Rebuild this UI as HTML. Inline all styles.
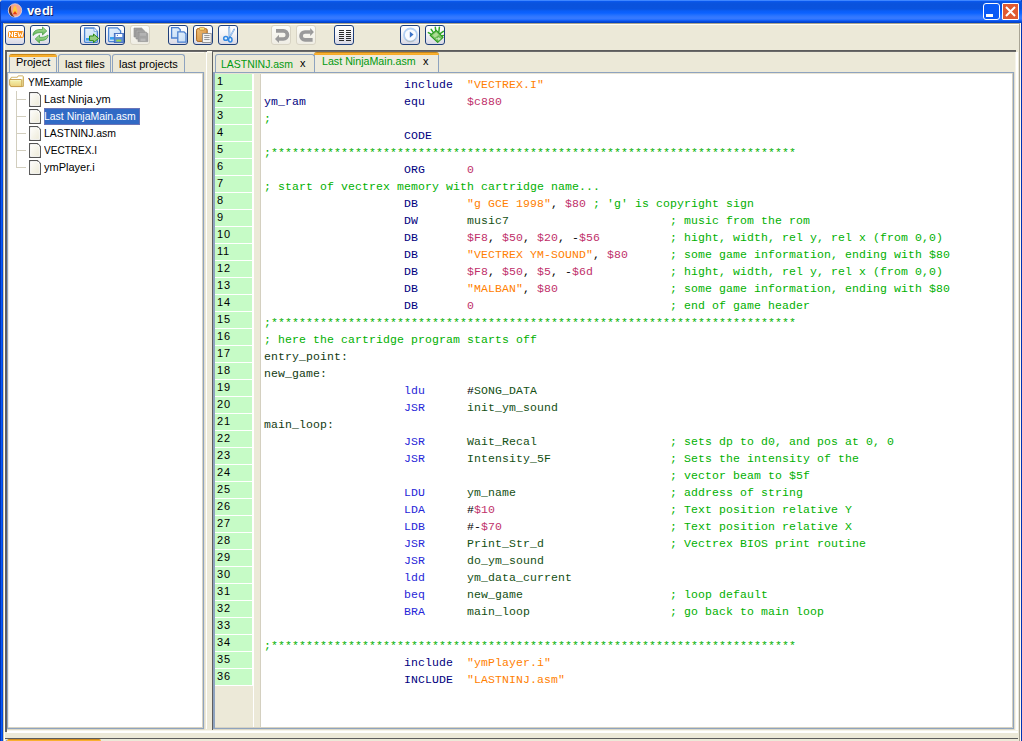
<!DOCTYPE html>
<html><head><meta charset="utf-8">
<style>
*{margin:0;padding:0;box-sizing:border-box}
html,body{width:1022px;height:741px;overflow:hidden;background:#ece9d8;position:relative;font-family:"Liberation Sans",sans-serif;font-size:11px}
.a{position:absolute}
/* title bar */
#title{left:0;top:0;width:1022px;height:23px;
 background:linear-gradient(to bottom,#3f86ff 0px,#3f86ff 1px,#0a5af5 1px,#0a55e4 2px,#0a52dc 4px,#0a53de 9px,#0a5ef8 11px,#0c62ff 13px,#2270ff 15px,#3478ff 17px,#3579ff 19px,#1866ff 20px,#0a55f0 21px,#0444cc 22px,#0040c4 23px)}
#title .txt{left:27px;top:3px;color:#fff;font-weight:bold;font-size:13px;letter-spacing:-0.3px;text-shadow:1px 1px 0 #0a1e6a}
.cap{top:3px;width:17px;height:17px;border:1px solid #fff;border-radius:3px}
/* left window border */
#lb{left:0;top:23px;width:3px;height:718px;background:linear-gradient(to right,#0034b4 0,#0034b4 1px,#0b5cf8 1px,#0a58f2 2px,#0048dc 2px,#0048dc 3px)}
#rb{left:1019px;top:23px;width:3px;height:718px;background:linear-gradient(to right,#a8a494 0,#a8a494 1px,#fcfaf2 1px,#fcfaf2 2px,#0034b4 2px)}
/* toolbar */
.tb{top:25px;width:20px;height:20px;border:1px solid #1e3f7a;border-radius:3px;background:linear-gradient(#ffffff,#f6f6f8 40%,#d8d8e4)}
.tbd{top:25px;width:20px;height:20px;border:1px solid #d8d4c4;border-radius:3px;background:linear-gradient(#fcfcf8,#efede4)}
.tb svg,.tbd svg{position:absolute;left:0;top:0}
/* docks */
.dark{background:#5f5f5f}
.bg{background:#8da0bb}
.tab{height:18px;border:1px solid #8ea3bf;border-bottom:none;border-radius:3px 3px 0 0;background:#ece9d8}
.tab span{position:absolute;white-space:nowrap}
.sel{border-top:none}
.sel .or{position:absolute;left:-1px;right:-1px;top:0;height:3px;background:linear-gradient(#c8881c 0,#c8881c 1px,#f9b232 1px,#f7a824);border-radius:3px 3px 0 0}
/* tree */
.tr{left:44px;white-space:nowrap;color:#000}
.fi{width:12px;height:14px}
/* editor */
#code{left:264px;top:76px;width:748px;height:653px;font-family:"Liberation Mono",monospace;font-size:11.5px;letter-spacing:0.1px}
.ln{position:absolute;left:0;height:17px;line-height:17px;white-space:pre;width:740px}
.ln i{position:absolute;top:0;font-style:normal;white-space:pre}
.k{color:#000080}.j{color:#2626d8}.o{color:#134f13}.s{color:#ff8000}.n{color:#c0306a}.c{color:#00b000}.p{color:#000}.l{color:#000080}.b{color:#123a12}
.g{position:absolute;left:0;width:37px;height:16px;background:#c6fbc6;line-height:14px;padding-left:2px;font-size:11px;color:#000;letter-spacing:0.8px}
</style></head><body>
<!-- title bar -->
<div id="title" class="a">
 <svg class="a" style="left:5px;top:1px" width="20" height="20" viewBox="0 0 20 20">
  <defs><radialGradient id="rg" cx="55%" cy="45%" r="55%"><stop offset="0" stop-color="#f4a898"/><stop offset="0.8" stop-color="#f0a090"/><stop offset="1" stop-color="#e8c8c0"/></radialGradient></defs>
  <circle cx="10" cy="9.4" r="6.7" fill="url(#rg)" stroke="#f4e4e0" stroke-width="0.7"/>
  <path d="M6.2 4.6 A6.4 6.4 0 0 0 9.6 15.9 Q4.8 12 6.2 4.6 Z" fill="#6a3422"/>
  <path d="M10 4.6 C11.6 6.6 12.8 9.2 12 12.2 L8 12.2 C7.2 9.2 8.4 6.6 10 4.6Z" fill="#ffc83c"/>
  <path d="M10 10 L12.2 13.2 L7.8 13.2Z" fill="#e83a10"/>
 </svg>
 <div class="a txt">ve<span style="margin-left:1px">di</span></div>
 <div class="a cap" style="left:983px;background:#0a5af5"><div class="a" style="left:2px;top:10px;width:7px;height:3px;background:#fff"></div></div>
 <div class="a cap" style="left:1002px;background:#e05a32;border-radius:1px">
  <svg class="a" style="left:0;top:0" width="15" height="15" viewBox="0 0 15 15"><path d="M3 3 L12 12 M12 3 L3 12" stroke="#fff" stroke-width="2"/></svg>
 </div>
</div>
<div id="lb" class="a"></div>
<div class="a" style="left:0;top:0;width:1px;height:1px;background:#e6dcb8"></div>
<div class="a" style="left:1px;top:0;width:1px;height:1px;background:#7f9ad8"></div>
<div class="a" style="left:0;top:1px;width:1px;height:1px;background:#7f9ad8"></div>
<div class="a" style="left:1021px;top:0;width:1px;height:2px;background:#0846c8"></div>
<div id="rb" class="a"></div>
<!-- toolbar frame highlights -->
<div class="a" style="left:3px;top:23px;width:1016px;height:1px;background:#aca68e"></div>
<div class="a" style="left:3px;top:24px;width:1016px;height:1px;background:#fffef8"></div>
<div class="a" style="left:3px;top:23px;width:1px;height:718px;background:#cfc8aa"></div>
<div class="a" style="left:4px;top:24px;width:1px;height:717px;background:#fffffa"></div>
<div class="a" style="left:0;top:2px;width:1px;height:21px;background:#0840c0"></div>

<!-- toolbar buttons -->
<svg width="0" height="0" style="position:absolute"><defs>
 <linearGradient id="gA" x1="0" y1="0" x2="0" y2="1"><stop offset="0" stop-color="#b4e4a4"/><stop offset="1" stop-color="#5ab04a"/></linearGradient>
 <linearGradient id="bD" x1="0" y1="0" x2="1" y2="1"><stop offset="0" stop-color="#e4f0fc"/><stop offset="1" stop-color="#c4dcf6"/></linearGradient>
 <linearGradient id="cB" x1="0" y1="0" x2="1" y2="1"><stop offset="0" stop-color="#f0c078"/><stop offset="1" stop-color="#d08838"/></linearGradient>
</defs></svg>
<div class="a tb" style="left:5px">
 <svg width="18" height="18" viewBox="0 0 18 18"><rect x="2" y="5" width="16" height="7" rx="2.2" fill="#f8921c"/><path d="M3.5 11 V6 M3.5 6.2 L6.5 10.8 M6.5 11 V6 M8.5 11 V6 M8 6.5 H11 M8 8.5 H10.5 M8 10.5 H11 M12 6 L13 10.8 L14.5 7.6 L16 10.8 L17 6" fill="none" stroke="#fff" stroke-width="1"/></svg>
</div>
<div class="a tb" style="left:30px">
 <svg width="18" height="18" viewBox="0 0 18 18"><path d="M2 9.5 C2 5.5 5 3.5 9 3.5 H11.5 V1 L15.8 5 L11.5 9 V6.6 H9 C6 6.6 4 7.8 2 9.5 Z" fill="url(#gA)" stroke="#3c9a3c" stroke-width="0.7"/><path d="M17 9 C17 13 14 14.5 10 14.5 H8.5 V17 L4.2 13 L8.5 9 V11.4 H10 C13 11.4 15 10.5 17 9 Z" fill="url(#gA)" stroke="#3c9a3c" stroke-width="0.7"/></svg>
</div>
<div class="a tb" style="left:80px">
 <svg width="18" height="18" viewBox="0 0 18 18"><path d="M3.6 2 H13 L16.4 5.4 V15.6 Q16.4 16.4 15.6 16.4 H4.4 Q3.6 16.4 3.6 15.6Z" fill="url(#bD)" stroke="#4a84d2" stroke-width="1.3"/><path d="M13 2 V5.4 H16.4" fill="#fff" stroke="#6a9ade" stroke-width="0.8"/><rect x="5" y="12" width="3.5" height="2.6" fill="#38a2f0"/><path d="M8.5 10 H12.5 V8 L17.6 12.4 L12.5 16.6 V14.6 H8.5Z" fill="#96cc80" stroke="#2a8a12" stroke-width="1"/></svg>
</div>
<div class="a tb" style="left:105px">
 <svg width="18" height="18" viewBox="0 0 18 18"><path d="M2.6 1.8 H11.5 L14.6 4.9 V14.8 Q14.6 15.6 13.8 15.6 H3.4 Q2.6 15.6 2.6 14.8Z" fill="url(#bD)" stroke="#4a84d2" stroke-width="1.3"/><rect x="4" y="11" width="4" height="2.6" fill="#38a2f0"/><rect x="8.3" y="7.4" width="9.2" height="9.2" fill="#5e8cd6" stroke="#3a66bc" stroke-width="0.8"/><rect x="9.6" y="8" width="6.6" height="3" fill="#fafcff"/><circle cx="11.4" cy="9.3" r="0.6" fill="#3a66bc"/><rect x="10.3" y="13.6" width="5" height="2" fill="#98d848"/></svg>
</div>
<div class="a tbd" style="left:130px">
 <svg width="18" height="18" viewBox="0 0 18 18"><path d="M3 2 H10.6 L12 3.4 V11 H3Z" fill="#a2a2a2" stroke="#8c8c8c" stroke-width="0.6"/><path d="M5 4 H12.6 L14 5.4 V13 H5Z" fill="#a8a8a8" stroke="#8c8c8c" stroke-width="0.6"/><path d="M7 6.2 H15.4 L16.8 7.6 V15.6 H7Z" fill="#a4a4a4" stroke="#8a8a8a" stroke-width="0.6"/><rect x="9" y="6.8" width="6" height="3" fill="#b4b4b4"/><rect x="9.5" y="12.6" width="5" height="2.4" fill="#b8b8b8"/></svg>
</div>
<div class="a tb" style="left:168px">
 <svg width="18" height="18" viewBox="0 0 18 18"><path d="M2.6 1.6 H9.2 L11.2 3.6 V12 H2.6Z" fill="url(#bD)" stroke="#4a80d0" stroke-width="1.3"/><path d="M8.8 5.8 H15 L17 7.8 V16.2 H8.8Z" fill="url(#bD)" stroke="#4a80d0" stroke-width="1.3"/></svg>
</div>
<div class="a tb" style="left:193px">
 <svg width="18" height="18" viewBox="0 0 18 18"><rect x="2.6" y="2.6" width="10.6" height="12.8" rx="1.6" fill="url(#cB)" stroke="#a86418" stroke-width="1"/><rect x="5.4" y="1.4" width="5.2" height="2.8" rx="0.8" fill="#f6e27a" stroke="#b87828" stroke-width="0.7"/><rect x="8.6" y="7.6" width="8.6" height="8.8" fill="#fafafa" stroke="#8a8a8a" stroke-width="0.9"/><path d="M10.2 9.6 H15.6 M10.2 11.6 H15.6 M10.2 13.6 H15.6" stroke="#8e8e8e" stroke-width="1"/></svg>
</div>
<div class="a tb" style="left:218px">
 <svg width="18" height="18" viewBox="0 0 18 18"><path d="M10.2 1.2 L10.5 10.6" stroke="#5c96d8" stroke-width="1.7" stroke-linecap="round"/><path d="M10.4 1.6 L10.6 10.2" stroke="#d4e6fa" stroke-width="0.7"/><path d="M15.2 3.4 L11.2 10.4" stroke="#6aa2e2" stroke-width="1.5" stroke-linecap="round"/><path d="M15 3.8 L11.4 10" stroke="#dceafa" stroke-width="0.6"/><ellipse cx="6.8" cy="12.4" rx="2.1" ry="1.9" fill="#e8f2fc" stroke="#3288e2" stroke-width="1.5"/><ellipse cx="11.3" cy="13.8" rx="1.7" ry="2.2" fill="#e8f2fc" stroke="#3288e2" stroke-width="1.5"/></svg>
</div>
<div class="a tbd" style="left:271px">
 <svg width="18" height="18" viewBox="0 0 18 18"><path d="M4 4.9 H11.4 A4.05 4.05 0 0 1 11.4 13 H6.6" fill="none" stroke="#9a9a9a" stroke-width="3.7"/><path d="M7 8.8 L3 12.9 L7 17 Z" fill="#9a9a9a"/></svg>
</div>
<div class="a tbd" style="left:296px">
 <svg width="18" height="18" viewBox="0 0 18 18"><path d="M13.6 6 H8 A3.95 3.95 0 0 0 8 13.9 H15.6" fill="none" stroke="#9a9a9a" stroke-width="3.7"/><path d="M13.2 2 L16.9 6 L13.2 10 Z" fill="#9a9a9a"/></svg>
</div>
<div class="a tb" style="left:334px">
 <svg width="18" height="18" viewBox="0 0 18 18"><path d="M4 4.4 H9 M4 6.4 H9 M4 8.4 H9 M4 10.4 H9 M4 12.4 H9 M4 14.4 H9 M11 4.4 H16 M11 6.4 H16 M11 8.4 H16 M11 10.4 H16 M11 12.4 H16 M11 14.4 H16" stroke="#2a2a2a" stroke-width="1.05"/></svg>
</div>
<div class="a tb" style="left:400px">
 <svg width="18" height="18" viewBox="0 0 18 18"><circle cx="9.5" cy="9" r="6.5" fill="#f8fbff" stroke="#b2d0f4" stroke-width="1.8"/><path d="M14.6 12.6 A6.2 6.2 0 0 1 4.6 13.6" fill="none" stroke="#b8b4a8" stroke-width="0.8"/><path d="M8.8 5.4 L12.6 8.6 L8.8 11.8Z" fill="#3a72c8"/></svg>
</div>
<div class="a tb" style="left:425px">
 <svg width="18" height="18" viewBox="0 0 18 18"><path d="M2.4 6.6 L5.4 8.4 M5.2 3.4 L7.4 6.6 M9.3 1.2 L9.8 5 M13.4 1.2 L12.8 6.4 M17.4 5.4 L13.8 7.8 M17.4 9.4 L15.2 10" stroke="#32a828" stroke-width="1.5" stroke-linecap="round"/><path d="M4.2 9.4 L10.3 4.4 L17 11.4 L11.7 16.4Z" fill="#7cc464" stroke="#2a9a20" stroke-width="1.2" stroke-linejoin="round"/><path d="M6.6 9.2 L10.3 6.3 L12.6 8.7 L9 11.8Z" fill="#b0dc98"/><path d="M9.4 11.8 H12 V10.2 L15.4 12.8 L12 15.4 V13.8 H9.4Z" fill="#c4e8b4" stroke="#3aa02a" stroke-width="0.5"/></svg>
</div>

<!-- dark line under toolbar -->
<div class="a" style="left:5px;top:50px;width:1011px;height:1px;background:#5c5c5c"></div>
<div class="a" style="left:5px;top:51px;width:1011px;height:1px;background:#6a6a6a"></div>
<div class="a" style="left:1016px;top:52px;width:2px;height:681px;background:#ffffff"></div>
<div class="a" style="left:1015px;top:52px;width:1px;height:681px;background:#f6f4ea"></div>

<!-- LEFT DOCK -->
<div class="a dark" style="left:5px;top:50px;width:2px;height:682px"></div>
<div class="a" style="left:7px;top:52px;width:197px;height:1px;background:#faf7ec"></div>
<!-- tabs -->
<div class="a tab sel" style="left:9px;top:54px;width:48px;height:18px;background:#eeebdd"><div class="or"></div><span style="left:6px;top:2px;color:#000">Project</span></div>
<div class="a tab" style="left:58px;top:54px;width:53px;height:18px"><span style="left:6px;top:3px;color:#000">last files</span></div>
<div class="a tab" style="left:112px;top:54px;width:73px;height:18px"><span style="left:6px;top:3px;color:#000">last projects</span></div>
<!-- tree panel -->
<div class="a" style="left:7px;top:72px;width:197px;height:657px;background:#fff;border:1px solid #8ea3bf"></div>
<div class="a" style="left:8px;top:73px;width:195px;height:1px;background:#ebe8da"></div>
<div class="a" style="left:8px;top:73px;width:1px;height:655px;background:#f0ede0"></div>
<div class="a" style="left:202px;top:73px;width:1px;height:655px;background:#d6d2c2"></div>
<div class="a" style="left:8px;top:727px;width:195px;height:1px;background:#d6d2c2"></div>
<div class="a" style="left:7px;top:729px;width:198px;height:1px;background:#dcd8c6"></div>
<div class="a" style="left:204px;top:72px;width:1px;height:658px;background:#e2dece"></div>
<!-- tree contents -->
<svg width="0" height="0" style="position:absolute"><defs><linearGradient id="fig" x1="0" y1="0" x2="1" y2="1"><stop offset="0" stop-color="#ffffff"/><stop offset="1" stop-color="#ebe8d4"/></linearGradient></defs></svg>
<svg class="a" style="left:9px;top:75px" width="16" height="13" viewBox="0 0 16 13"><defs><linearGradient id="fg" x1="0" y1="0" x2="0" y2="1"><stop offset="0" stop-color="#fffff4"/><stop offset="0.2" stop-color="#f2eea8"/><stop offset="1" stop-color="#ecd07c"/></linearGradient></defs><path d="M1.6 3.4 L2.4 2.3 H8.4 L9.2 0.9 H13.6 L14.4 1.6 V11.4 H2Z" fill="#f2eaa8" stroke="#c4a050" stroke-width="0.9"/><path d="M2.6 2.8 H8.6 L9.4 1.6 H13.4 V4 H2.6Z" fill="#ffffff"/><path d="M0.6 4.5 H12 L12.8 5.2 V11.6 H1.8 L1.4 10.2 H0.6Z" fill="url(#fg)" stroke="#c49a48" stroke-width="0.9"/></svg>
<div class="a tr" style="left:28px;top:76px;transform:scaleX(0.92);transform-origin:0 0">YMExample</div>
<div class="a" style="left:16px;top:91px;width:1px;height:77px;background:#d2cebe"></div>
<div class="a" style="left:17px;top:99px;width:9px;height:1px;background:#d2cebe"></div>
<div class="a" style="left:17px;top:116px;width:9px;height:1px;background:#d2cebe"></div>
<div class="a" style="left:17px;top:133px;width:9px;height:1px;background:#d2cebe"></div>
<div class="a" style="left:17px;top:150px;width:9px;height:1px;background:#d2cebe"></div>
<div class="a" style="left:17px;top:167px;width:9px;height:1px;background:#d2cebe"></div>
<svg class="a" style="left:29px;top:92px" width="12" height="15" viewBox="0 0 12 15"><path d="M0.6 0.6 H8.4 L11.4 3.6 V14.4 H0.6Z" fill="url(#fig)" stroke="#545454" stroke-width="1.1"/><path d="M1.6 1.6 H8 L10.4 4 V13.4 H1.6Z" fill="none" stroke="#ffffff" stroke-width="0.8"/><circle cx="9.4" cy="2.6" r="0.9" fill="#fff"/></svg>
<svg class="a" style="left:29px;top:109px" width="12" height="15" viewBox="0 0 12 15"><path d="M0.6 0.6 H8.4 L11.4 3.6 V14.4 H0.6Z" fill="url(#fig)" stroke="#545454" stroke-width="1.1"/><path d="M1.6 1.6 H8 L10.4 4 V13.4 H1.6Z" fill="none" stroke="#ffffff" stroke-width="0.8"/><circle cx="9.4" cy="2.6" r="0.9" fill="#fff"/></svg>
<svg class="a" style="left:29px;top:126px" width="12" height="15" viewBox="0 0 12 15"><path d="M0.6 0.6 H8.4 L11.4 3.6 V14.4 H0.6Z" fill="url(#fig)" stroke="#545454" stroke-width="1.1"/><path d="M1.6 1.6 H8 L10.4 4 V13.4 H1.6Z" fill="none" stroke="#ffffff" stroke-width="0.8"/><circle cx="9.4" cy="2.6" r="0.9" fill="#fff"/></svg>
<svg class="a" style="left:29px;top:143px" width="12" height="15" viewBox="0 0 12 15"><path d="M0.6 0.6 H8.4 L11.4 3.6 V14.4 H0.6Z" fill="url(#fig)" stroke="#545454" stroke-width="1.1"/><path d="M1.6 1.6 H8 L10.4 4 V13.4 H1.6Z" fill="none" stroke="#ffffff" stroke-width="0.8"/><circle cx="9.4" cy="2.6" r="0.9" fill="#fff"/></svg>
<svg class="a" style="left:29px;top:160px" width="12" height="15" viewBox="0 0 12 15"><path d="M0.6 0.6 H8.4 L11.4 3.6 V14.4 H0.6Z" fill="url(#fig)" stroke="#545454" stroke-width="1.1"/><path d="M1.6 1.6 H8 L10.4 4 V13.4 H1.6Z" fill="none" stroke="#ffffff" stroke-width="0.8"/><circle cx="9.4" cy="2.6" r="0.9" fill="#fff"/></svg>
<div class="a" style="left:44px;top:108px;width:96px;height:17px;background:#316ac5;border:1px solid #6a74b8"></div>
<div class="a tr" style="top:93px">Last Ninja.ym</div>
<div class="a tr" style="top:110px;color:#fff;transform:scaleX(0.95);transform-origin:0 0">Last NinjaMain.asm</div>
<div class="a tr" style="top:127px;transform:scaleX(0.95);transform-origin:0 0">LASTNINJ.asm</div>
<div class="a tr" style="top:144px;transform:scaleX(0.915);transform-origin:0 0">VECTREX.I</div>
<div class="a tr" style="top:161px">ymPlayer.i</div>

<!-- splitter -->
<div class="a" style="left:207px;top:51px;width:5px;height:2px;background:#f6f4e8"></div>
<div class="a" style="left:206px;top:52px;width:1px;height:677px;background:#ffffff"></div>

<!-- EDITOR DOCK -->
<div class="a dark" style="left:212px;top:52px;width:1px;height:679px"></div>
<div class="a tab" style="left:215px;top:54px;width:100px;height:18px"><span style="left:5px;top:3px;color:#009a10;transform:scaleX(0.95);transform-origin:0 0">LASTNINJ.asm</span><span style="left:84px;top:2px;color:#000">x</span></div>
<div class="a tab sel" style="left:314px;top:52px;width:125px;height:20px;background:#eeebdd"><div class="or"></div><span style="left:7px;top:3px;color:#009a10;transform:scaleX(0.97);transform-origin:0 0">Last NinjaMain.asm</span><span style="left:108px;top:3px;color:#000">x</span></div>
<!-- editor frame -->
<div class="a" style="left:213px;top:72px;width:801px;height:657px;background:#fff;border:1px solid #8ea3bf;border-width:1px 1px 1px 2px"></div>
<div class="a" style="left:215px;top:73px;width:797px;height:1px;background:#e8e4d4"></div>
<div class="a" style="left:1012px;top:73px;width:1px;height:655px;background:#d2cebe"></div>
<div class="a" style="left:215px;top:727px;width:798px;height:1px;background:#d6d2c2"></div>
<div class="a" style="left:213px;top:729px;width:802px;height:1px;background:#dcd8c6"></div>
<!-- gutter -->
<div class="a" style="left:215px;top:686px;width:38px;height:41px;background:#ece9d8"></div>
<div class="a" style="left:254px;top:74px;width:7px;height:653px;background:#ece9d8;border-right:1px solid #d4d0c0"></div>
<div class="a" style="left:215px;top:74px;width:37px;height:612px">
<div class="g" style="top:0px">1</div>
<div class="g" style="top:17px">2</div>
<div class="g" style="top:34px">3</div>
<div class="g" style="top:51px">4</div>
<div class="g" style="top:68px">5</div>
<div class="g" style="top:85px">6</div>
<div class="g" style="top:102px">7</div>
<div class="g" style="top:119px">8</div>
<div class="g" style="top:136px">9</div>
<div class="g" style="top:153px">10</div>
<div class="g" style="top:170px">11</div>
<div class="g" style="top:187px">12</div>
<div class="g" style="top:204px">13</div>
<div class="g" style="top:221px">14</div>
<div class="g" style="top:238px">15</div>
<div class="g" style="top:255px">16</div>
<div class="g" style="top:272px">17</div>
<div class="g" style="top:289px">18</div>
<div class="g" style="top:306px">19</div>
<div class="g" style="top:323px">20</div>
<div class="g" style="top:340px">21</div>
<div class="g" style="top:357px">22</div>
<div class="g" style="top:374px">23</div>
<div class="g" style="top:391px">24</div>
<div class="g" style="top:408px">25</div>
<div class="g" style="top:425px">26</div>
<div class="g" style="top:442px">27</div>
<div class="g" style="top:459px">28</div>
<div class="g" style="top:476px">29</div>
<div class="g" style="top:493px">30</div>
<div class="g" style="top:510px">31</div>
<div class="g" style="top:527px">32</div>
<div class="g" style="top:544px">33</div>
<div class="g" style="top:561px">34</div>
<div class="g" style="top:578px">35</div>
<div class="g" style="top:595px">36</div>
</div>
<div id="code" class="a">
<div class="ln" style="top:0px"><i style="left:140px"><span class="k">include</span></i><i style="left:203px"><span class="s">&quot;VECTREX.I&quot;</span></i></div>
<div class="ln" style="top:17px"><i style="left:0px"><span class="l">ym_ram</span></i><i style="left:140px"><span class="k">equ</span></i><i style="left:203px"><span class="n">$c880</span></i></div>
<div class="ln" style="top:34px"><i style="left:0px"><span class="c">;</span></i></div>
<div class="ln" style="top:51px"><i style="left:140px"><span class="k">CODE</span></i></div>
<div class="ln" style="top:68px"><i style="left:0px"><span class="c">;***************************************************************************</span></i></div>
<div class="ln" style="top:85px"><i style="left:140px"><span class="k">ORG</span></i><i style="left:203px"><span class="n">0</span></i></div>
<div class="ln" style="top:102px"><i style="left:0px"><span class="c">; start of vectrex memory with cartridge name...</span></i></div>
<div class="ln" style="top:119px"><i style="left:140px"><span class="k">DB</span></i><i style="left:203px"><span class="s">&quot;g GCE 1998&quot;</span><span class="p">, </span><span class="n">$80</span><span class="p"> </span><span class="c">; &#x27;g&#x27; is copyright sign</span></i></div>
<div class="ln" style="top:136px"><i style="left:140px"><span class="k">DW</span></i><i style="left:203px"><span class="o">music7</span></i><i style="left:406px"><span class="c">; music from the rom</span></i></div>
<div class="ln" style="top:153px"><i style="left:140px"><span class="k">DB</span></i><i style="left:203px"><span class="n">$F8</span><span class="p">, </span><span class="n">$50</span><span class="p">, </span><span class="n">$20</span><span class="p">, -</span><span class="n">$56</span></i><i style="left:406px"><span class="c">; hight, width, rel y, rel x (from 0,0)</span></i></div>
<div class="ln" style="top:170px"><i style="left:140px"><span class="k">DB</span></i><i style="left:203px"><span class="s">&quot;VECTREX YM-SOUND&quot;</span><span class="p">, </span><span class="n">$80</span></i><i style="left:406px"><span class="c">; some game information, ending with $80</span></i></div>
<div class="ln" style="top:187px"><i style="left:140px"><span class="k">DB</span></i><i style="left:203px"><span class="n">$F8</span><span class="p">, </span><span class="n">$50</span><span class="p">, </span><span class="n">$5</span><span class="p">, -</span><span class="n">$6d</span></i><i style="left:406px"><span class="c">; hight, width, rel y, rel x (from 0,0)</span></i></div>
<div class="ln" style="top:204px"><i style="left:140px"><span class="k">DB</span></i><i style="left:203px"><span class="s">&quot;MALBAN&quot;</span><span class="p">, </span><span class="n">$80</span></i><i style="left:406px"><span class="c">; some game information, ending with $80</span></i></div>
<div class="ln" style="top:221px"><i style="left:140px"><span class="k">DB</span></i><i style="left:203px"><span class="n">0</span></i><i style="left:406px"><span class="c">; end of game header</span></i></div>
<div class="ln" style="top:238px"><i style="left:0px"><span class="c">;***************************************************************************</span></i></div>
<div class="ln" style="top:255px"><i style="left:0px"><span class="c">; here the cartridge program starts off</span></i></div>
<div class="ln" style="top:272px"><i style="left:0px"><span class="b">entry_point:</span></i></div>
<div class="ln" style="top:289px"><i style="left:0px"><span class="b">new_game:</span></i></div>
<div class="ln" style="top:306px"><i style="left:140px"><span class="j">ldu</span></i><i style="left:203px"><span class="p">#</span><span class="o">SONG_DATA</span></i></div>
<div class="ln" style="top:323px"><i style="left:140px"><span class="j">JSR</span></i><i style="left:203px"><span class="o">init_ym_sound</span></i></div>
<div class="ln" style="top:340px"><i style="left:0px"><span class="b">main_loop:</span></i></div>
<div class="ln" style="top:357px"><i style="left:140px"><span class="j">JSR</span></i><i style="left:203px"><span class="o">Wait_Recal</span></i><i style="left:406px"><span class="c">; sets dp to d0, and pos at 0, 0</span></i></div>
<div class="ln" style="top:374px"><i style="left:140px"><span class="j">JSR</span></i><i style="left:203px"><span class="o">Intensity_5F</span></i><i style="left:406px"><span class="c">; Sets the intensity of the</span></i></div>
<div class="ln" style="top:391px"><i style="left:406px"><span class="c">; vector beam to $5f</span></i></div>
<div class="ln" style="top:408px"><i style="left:140px"><span class="j">LDU</span></i><i style="left:203px"><span class="o">ym_name</span></i><i style="left:406px"><span class="c">; address of string</span></i></div>
<div class="ln" style="top:425px"><i style="left:140px"><span class="j">LDA</span></i><i style="left:203px"><span class="p">#</span><span class="n">$10</span></i><i style="left:406px"><span class="c">; Text position relative Y</span></i></div>
<div class="ln" style="top:442px"><i style="left:140px"><span class="j">LDB</span></i><i style="left:203px"><span class="p">#-</span><span class="n">$70</span></i><i style="left:406px"><span class="c">; Text position relative X</span></i></div>
<div class="ln" style="top:459px"><i style="left:140px"><span class="j">JSR</span></i><i style="left:203px"><span class="o">Print_Str_d</span></i><i style="left:406px"><span class="c">; Vectrex BIOS print routine</span></i></div>
<div class="ln" style="top:476px"><i style="left:140px"><span class="j">JSR</span></i><i style="left:203px"><span class="o">do_ym_sound</span></i></div>
<div class="ln" style="top:493px"><i style="left:140px"><span class="j">ldd</span></i><i style="left:203px"><span class="o">ym_data_current</span></i></div>
<div class="ln" style="top:510px"><i style="left:140px"><span class="j">beq</span></i><i style="left:203px"><span class="o">new_game</span></i><i style="left:406px"><span class="c">; loop default</span></i></div>
<div class="ln" style="top:527px"><i style="left:140px"><span class="j">BRA</span></i><i style="left:203px"><span class="o">main_loop</span></i><i style="left:406px"><span class="c">; go back to main loop</span></i></div>
<div class="ln" style="top:544px"></div>
<div class="ln" style="top:561px"><i style="left:0px"><span class="c">;***************************************************************************</span></i></div>
<div class="ln" style="top:578px"><i style="left:140px"><span class="k">include</span></i><i style="left:203px"><span class="s">&quot;ymPlayer.i&quot;</span></i></div>
<div class="ln" style="top:595px"><i style="left:140px"><span class="k">INCLUDE</span></i><i style="left:203px"><span class="s">&quot;LASTNINJ.asm&quot;</span></i></div>
</div>
<div class="a" style="left:1014px;top:72px;width:1px;height:658px;background:#e2dece"></div>

<!-- bottom -->
<div class="a" style="left:7px;top:730px;width:1011px;height:1px;background:#f6f4ea"></div>
<div class="a" style="left:7px;top:731px;width:1011px;height:2px;background:#ffffff"></div>
<div class="a" style="left:5px;top:738px;width:1013px;height:1px;background:#5c5c5c"></div>
<div class="a" style="left:7px;top:739px;width:94px;height:2px;background:linear-gradient(#d28c1e 0,#d28c1e 1px,#f8b030 1px);border-radius:2px 2px 0 0"></div>
<div class="a" style="left:6px;top:740px;width:1px;height:1px;background:#9aaac0"></div>
</body></html>
